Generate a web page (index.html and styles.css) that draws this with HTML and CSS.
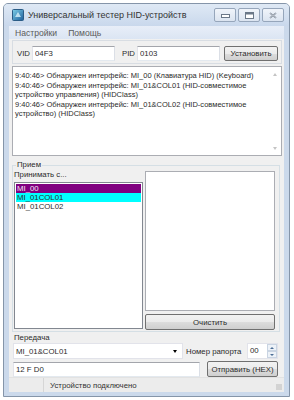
FILE: index.html
```html
<!DOCTYPE html>
<html lang="ru">
  <head>
    <meta charset="UTF-8" />
    <title>Универсальный тестер HID-устройств</title>
    <link rel="stylesheet" href="styles.css">
  </head>
  <body>
    <div class="window">
      <div class="titlebar">
        <svg class="app-icon" width="12" height="12" viewBox="0 0 12 12">
          <defs>
            <linearGradient id="ig" x1="0" y1="0" x2="1" y2="1">
              <stop offset="0" stop-color="#7fd0e8" />
              <stop offset="1" stop-color="#1d5f9c" />
            </linearGradient>
          </defs>
          <rect x="0.5" y="0.5" width="11" height="11" rx="1" fill="url(#ig)" stroke="#2b5c86" />
          <path d="M3 8 L6 3 L9 8 Z" fill="#d8f2fb" opacity="0.8" />
        </svg>
        <span class="title">Универсальный тестер HID-устройств</span>
        <div class="caption-buttons">
          <span class="cap-btn"><svg width="9" height="5" viewBox="0 0 9 5"><rect x="0.5" y="1.5" width="8" height="3" fill="#fff" stroke="#6b7888" /></svg></span>
          <span class="cap-btn"><svg width="9" height="7" viewBox="0 0 9 7"><rect x="0.5" y="0.5" width="8" height="6" fill="#fff" stroke="#6b7888" /><rect x="1" y="1" width="7" height="1.5" fill="#6b7888" /></svg></span>
          <span class="cap-btn"><svg width="8" height="7" viewBox="0 0 8 7"><path d="M1 1 L7 6 M7 1 L1 6" stroke="#6b7888" stroke-width="1.6" /><path d="M1 1 L7 6 M7 1 L1 6" stroke="#fff" stroke-width="0.5" /></svg></span>
        </div>
      </div>
      <div class="frame">
        <div class="client">
          <div class="menubar">
            <span>Настройки</span>
            <span>Помощь</span>
          </div>

          <div class="device-panel">
            <label class="field-label" for="vid">VID</label>
            <input class="textbox id-box" id="vid" value="04F3" />
            <label class="field-label pid" for="pid">PID</label>
            <input class="textbox id-box" id="pid" value="0103" />
            <button class="btn set-btn">Установить</button>
          </div>

          <div class="log">
            <div class="log-text">
              9:40:46&gt; Обнаружен интерфейс: MI_00 (Клавиатура HID) (Keyboard)<br>
              9:40:46&gt; Обнаружен интерфейс: MI_01&amp;COL01 (HID-совместимое<br>
              устройство управления) (HIDClass)<br>
              9:40:46&gt; Обнаружен интерфейс: MI_01&amp;COL02 (HID-совместимое<br>
              устройство) (HIDClass)
            </div>
            <div class="vscroll">
              <span class="arrow up"></span>
              <span class="arrow down"></span>
            </div>
          </div>

          <fieldset class="group receive">
            <legend>Прием</legend>
            <div class="receive-left">
              <div class="caption">Принимать с...</div>
              <ul class="listbox">
                <li class="item purple">MI_00</li>
                <li class="item cyan">MI_01COL01</li>
                <li class="item">MI_01COL02</li>
              </ul>
            </div>
            <div class="receive-right">
              <div class="data-box"></div>
              <button class="btn clear-btn">Очистить</button>
            </div>
          </fieldset>

          <div class="transmit">
            <div class="caption">Передача</div>
            <div class="row">
              <div class="combo">
                <span>MI_01&amp;COL01</span>
                <span class="combo-arrow"></span>
              </div>
              <span class="report-label">Номер рапорта</span>
              <div class="updown">
                <span class="updown-value">00</span>
                <span class="spin">
                  <span class="spin-btn"><span class="tri up"></span></span>
                  <span class="spin-btn"><span class="tri down"></span></span>
                </span>
              </div>
            </div>
            <div class="row second">
              <input class="textbox data-input" value="12 F D0" />
              <button class="btn send-btn">Отправить (HEX)</button>
            </div>
          </div>

          <div class="statusbar">
            <span class="status-first"></span>
            <span class="status-text">Устройство подключено</span>
            <span class="grip"></span>
          </div>
        </div>
      </div>
    </div>
  </body>
</html>
```

FILE: styles.css
```css
body {
  margin: 0;
  background: #fff;
  font-family: "Liberation Sans", Arial, sans-serif;
  font-size: 7.8px;
  color: #2b2b2b;
}

.window {
  box-sizing: border-box;
  margin: 3px 0 0 3px;
  width: 287px;
  height: 394px;
  border: 1px solid #8595a9;
  border-radius: 5px 5px 0 0;
  background: #cbd9eb;
  display: flex;
  flex-direction: column;
}

.titlebar {
  height: 22px;
  display: flex;
  align-items: center;
  padding: 0 5px 0 8px;
  border-radius: 4px 4px 0 0;
  background: linear-gradient(#dfe9f5, #c9d8ec);
}

.app-icon {
  flex: none;
}

.title {
  margin-left: 4px;
  font-size: 9px;
  color: #333;
}

.caption-buttons {
  margin-left: auto;
  display: flex;
  gap: 2px;
}

.cap-btn {
  box-sizing: border-box;
  width: 22px;
  height: 14px;
  border: 1px solid #96a6bb;
  border-radius: 2px;
  background: linear-gradient(#f0f4fa, #dbe4f0);
  display: flex;
  align-items: center;
  justify-content: center;
}

.frame {
  flex: 1;
  display: flex;
  padding: 0 5px 4px 5px;
}

.client {
  flex: 1;
  display: flex;
  flex-direction: column;
  background: #f0f0f0;
  padding: 0 2px 0 3px;
}

.menubar {
  height: 13px;
  margin: 0 -2px 1px -3px;
  padding-left: 6px;
  display: flex;
  align-items: center;
  gap: 11px;
  background: linear-gradient(#e8eef8, #dbe5f3);
  color: #5b5b5b;
  font-size: 8.6px;
}

.device-panel {
  box-sizing: border-box;
  height: 24px;
  border: 1px solid #d8dde3;
  padding: 5px 0 0 4px;
  display: flex;
  align-items: flex-start;
}

.field-label {
  width: 15px;
  line-height: 15px;
}

.field-label.pid {
  margin-left: 7px;
}

.textbox {
  box-sizing: border-box;
  height: 15px;
  border: 1px solid #abadb3;
  border-top-color: #a3a5ab;
  border-left-color: #e2e3ea;
  border-bottom-color: #e3e9ef;
  border-right-color: #dbdfe6;
  background: #fff;
  padding: 0 2px;
  font: inherit;
  color: inherit;
  margin: 0;
}

.id-box {
  width: 83px;
}

.btn {
  box-sizing: border-box;
  height: 15px;
  border: 1px solid #707070;
  border-radius: 2px;
  background: linear-gradient(#f2f2f2 0, #ebebeb 50%, #dddddd 51%, #cfcfcf 100%);
  font: inherit;
  padding: 0;
  color: #2b2b2b;
}

.set-btn {
  width: 54px;
  margin-left: 4px;
}

.log {
  box-sizing: border-box;
  height: 90px;
  margin-top: 2px;
  border: 1px solid #abadb3;
  background: #fff;
  display: flex;
}

.log-text {
  flex: 1;
  padding: 4px 0 0 2px;
  font-size: 7.5px;
  line-height: 9.5px;
  white-space: nowrap;
  overflow: hidden;
}

.vscroll {
  width: 13px;
  display: flex;
  flex-direction: column;
  justify-content: space-between;
  align-items: center;
  padding: 6px 0 5px;
}

.arrow {
  width: 0;
  height: 0;
  border-left: 2.5px solid transparent;
  border-right: 2.5px solid transparent;
}

.arrow.up {
  border-bottom: 3px solid #c4c4c4;
}

.arrow.down {
  border-top: 3px solid #c4c4c4;
}

.group {
  margin: 4px 2px 0 0;
  border: 1px solid #d5dfe5;
  padding: 0 1px 1px 1px;
  display: grid;
  grid-template-columns: 129px 130px;
  column-gap: 2px;
  min-width: 0;
}

.group legend {
  padding: 0 1px;
  margin-left: 2px;
  line-height: 10px;
}

.receive-left {
  display: flex;
  flex-direction: column;
}

.caption {
  height: 12px;
  line-height: 10px;
}

.listbox {
  box-sizing: border-box;
  height: 147px;
  margin: 0;
  padding: 1px;
  list-style: none;
  border: 1px solid #828790;
  background: #fff;
}

.item {
  height: 9px;
  line-height: 9px;
  padding-left: 1px;
}

.item.purple {
  background: #800080;
  color: #f4e6f4;
}

.item.cyan {
  background: #00ffff;
}

.receive-right {
  display: flex;
  flex-direction: column;
  padding-top: 1px;
}

.data-box {
  box-sizing: border-box;
  height: 140px;
  border: 1px solid #abadb3;
  background: #fff;
}

.clear-btn {
  margin-top: 3px;
  height: 16px;
}

.transmit {
  margin: 0 4px 0 1px;
}

.transmit .caption {
  height: 11px;
  line-height: 11px;
  padding-left: 1px;
}

.row {
  display: flex;
  align-items: center;
  height: 16px;
}

.row.second {
  margin-top: 2px;
}

.combo {
  box-sizing: border-box;
  width: 170px;
  height: 16px;
  border: 1px solid #e2e3ea;
  background: #fff;
  display: flex;
  align-items: center;
  padding: 0 5px 0 2px;
}

.combo-arrow {
  margin-left: auto;
  border-left: 2.5px solid transparent;
  border-right: 2.5px solid transparent;
  border-top: 3px solid #000;
}

.report-label {
  margin-left: 3px;
}

.updown {
  box-sizing: border-box;
  margin-left: auto;
  width: 31px;
  height: 16px;
  border: 1px solid #e2e3ea;
  background: #fff;
  display: flex;
}

.updown-value {
  flex: 1;
  padding-left: 2px;
  line-height: 14px;
}

.spin {
  width: 10px;
  display: flex;
  flex-direction: column;
}

.spin-btn {
  flex: 1;
  border: 1px solid #c9d4e2;
  background: #edf2f8;
  display: flex;
  align-items: center;
  justify-content: center;
}

.tri {
  border-left: 2px solid transparent;
  border-right: 2px solid transparent;
}

.tri.up {
  border-bottom: 2px solid #4d6e96;
}

.tri.down {
  border-top: 2px solid #4d6e96;
}

.data-input {
  width: 187px;
  height: 15px;
}

.send-btn {
  margin-left: auto;
  width: 71px;
  height: 16px;
}

.statusbar {
  margin: auto -2px 0 -3px;
  height: 14px;
  display: flex;
  align-items: center;
  background: #ececec;
  border-top: 1px solid #e2e2e2;
}

.status-first {
  width: 34px;
  height: 100%;
  border-right: 1px solid #d6d6d6;
}

.status-text {
  margin-left: 6px;
  color: #333;
}

.grip {
  margin-left: auto;
  width: 6px;
  height: 6px;
  margin-right: 2px;
  background: radial-gradient(circle, #b5b5b5 0.6px, transparent 0.8px) 0 0 / 2px 2px;
  align-self: flex-end;
  margin-bottom: 2px;
}
```
